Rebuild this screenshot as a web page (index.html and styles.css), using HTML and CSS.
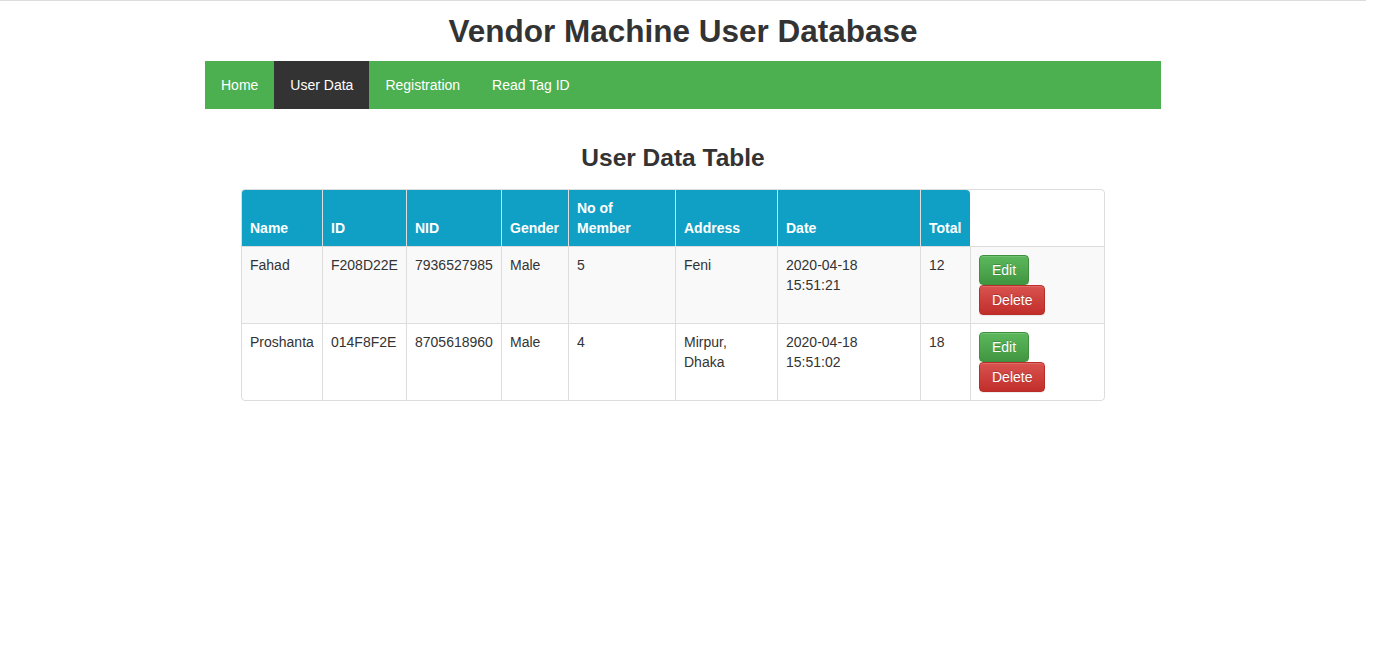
FILE: index.html
```html
<!DOCTYPE html>
<html lang="en">
<head>
<meta charset="utf-8">
<title>Vendor Machine User Database</title>
<link rel="stylesheet" href="styles.css">
</head>
<body>
<div class="page">
  <h1 class="title">Vendor Machine User Database</h1>
  <nav class="topnav">
    <a href="#">Home</a>
    <a href="#" class="active">User Data</a>
    <a href="#">Registration</a>
    <a href="#">Read Tag ID</a>
  </nav>
  <div class="content">
    <h2 class="subtitle">User Data Table</h2>
    <table class="data">
      <thead>
        <tr>
          <th class="c-name">Name</th>
          <th class="c-id">ID</th>
          <th class="c-nid">NID</th>
          <th class="c-gender">Gender</th>
          <th class="c-member">No of Member</th>
          <th class="c-address">Address</th>
          <th class="c-date">Date</th>
          <th class="c-total">Total</th>
        </tr>
      </thead>
      <tbody>
        <tr class="odd">
          <td>Fahad</td>
          <td>F208D22E</td>
          <td>7936527985</td>
          <td>Male</td>
          <td>5</td>
          <td>Feni</td>
          <td>2020-04-18<br>15:51:21</td>
          <td>12</td>
          <td class="c-action"><div class="actions"><a href="#" class="btn btn-success">Edit</a><a href="#" class="btn btn-danger">Delete</a></div></td>
        </tr>
        <tr>
          <td>Proshanta</td>
          <td>014F8F2E</td>
          <td>8705618960</td>
          <td>Male</td>
          <td>4</td>
          <td>Mirpur,<br>Dhaka</td>
          <td>2020-04-18<br>15:51:02</td>
          <td>18</td>
          <td class="c-action"><div class="actions"><a href="#" class="btn btn-success">Edit</a><a href="#" class="btn btn-danger">Delete</a></div></td>
        </tr>
      </tbody>
    </table>
  </div>
</div>
</body>
</html>
```

FILE: styles.css
```css
html, body {
  margin: 0;
  padding: 0;
  background: #fff;
}

body {
  font-family: "Liberation Sans", Arial, Helvetica, sans-serif;
  font-size: 14px;
  line-height: 20px;
  color: #333;
}

.page {
  width: 1366px;
  border-top: 1px solid #dcdcdc;
}

.title {
  margin: 12px 0 11px;
  font-size: 31.5px;
  line-height: 37px;
  font-weight: bold;
  text-align: center;
  color: #333;
}

.topnav {
  width: 956px;
  margin: 0 auto;
  display: flex;
  background: #4caf50;
}

.topnav a {
  display: block;
  padding: 14px 16px;
  color: #fff;
  text-decoration: none;
  font-size: 14px;
  line-height: 20px;
}

.topnav a.active {
  background: #333;
}

.content {
  width: 864px;
  margin-left: 241px;
}

.subtitle {
  margin: 35px 0 17px;
  font-size: 24.5px;
  line-height: 28px;
  font-weight: bold;
  text-align: center;
  color: #333;
}

.data {
  width: 864px;
  table-layout: fixed;
  border-collapse: separate;
  border-spacing: 0;
  border: 1px solid #ddd;
  border-radius: 4px;
}

.data th,
.data td {
  box-sizing: border-box;
  padding: 8px;
  text-align: left;
  border-left: 1px solid #ddd;
}

.data th:first-child,
.data td:first-child {
  border-left: none;
}

.data th {
  background: #11a0c5;
  color: #fff;
  font-weight: bold;
  vertical-align: bottom;
}

.data th:first-child {
  border-top-left-radius: 3px;
}

.data th:last-child {
  border-top-right-radius: 4px;
}

.data td {
  vertical-align: top;
  border-top: 1px solid #ddd;
}

.data tr.odd td {
  background: #f9f9f9;
}

.c-name { width: 80px; }
.c-id { width: 84px; }
.c-nid { width: 95px; }
.c-gender { width: 67px; }
.c-member { width: 107px; }
.c-address { width: 102px; }
.c-date { width: 143px; }
.c-total { width: 50px; }

.actions {
  display: flex;
  flex-direction: column;
  align-items: flex-start;
}

.btn {
  display: inline-block;
  box-sizing: border-box;
  height: 30px;
  padding: 4px 12px;
  font-size: 14px;
  line-height: 20px;
  color: #fff;
  text-decoration: none;
  border: 1px solid transparent;
  border-radius: 4px;
  text-shadow: 0 -1px 0 rgba(0, 0, 0, 0.2);
  box-shadow: inset 0 1px 0 rgba(255, 255, 255, 0.15), 0 1px 1px rgba(0, 0, 0, 0.075);
}

.btn-success {
  background-image: linear-gradient(to bottom, #5cb85c 0, #419641 100%);
  border-color: #3e8f3e;
}

.btn-danger {
  background-image: linear-gradient(to bottom, #d9534f 0, #c12e2a 100%);
  border-color: #b92c28;
}
```
